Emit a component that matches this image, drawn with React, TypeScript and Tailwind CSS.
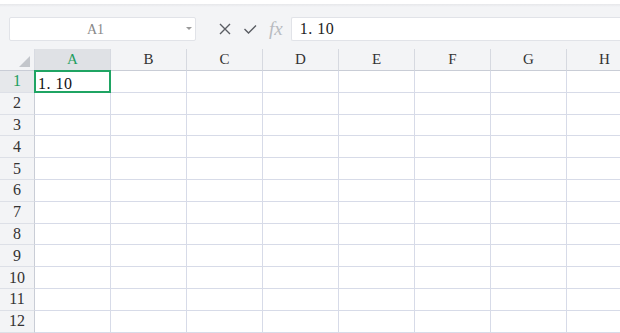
import React from 'react'

const COLS = ['A', 'B', 'C', 'D', 'E', 'F', 'G', 'H']
const ROWS = [1, 2, 3, 4, 5, 6, 7, 8, 9, 10, 11, 12]

const serif = "font-['Liberation_Serif','DejaVu_Serif',serif]"

const Toolbar = () => (
  <div className="h-[49px] bg-[#f3f4f6] border-t-[4px] border-t-white relative">
    <div className="absolute inset-x-0 top-0 h-[3px] bg-gradient-to-b from-[#e6e7ea] to-[#f3f4f6]" />
    <div className="flex items-center pt-[13px]">
      <div className="ml-[9px] w-[187px] h-[24px] bg-white border border-[#e1e3e8] rounded-[2px] flex items-center relative">
        <span className={`${serif} text-[14px] text-[#888] w-full text-center pr-[14px]`}>A1</span>
        <span className="absolute right-[3px] top-[9px] w-0 h-0 border-x-[3px] border-x-transparent border-t-[3px] border-t-[#999]" />
      </div>
      <div className="flex items-center ml-[20px] gap-[10px] text-[#555]">
        <svg width="14" height="14" viewBox="0 0 14 14" className="ml-[2px]">
          <path d="M2 2 L12 12 M12 2 L2 12" stroke="#5a5d63" strokeWidth="1.4" fill="none" />
        </svg>
        <svg width="14" height="14" viewBox="0 0 14 14" className="ml-[1px]">
          <path d="M1.5 7 L5.5 11 L13 3.5" stroke="#5a5d63" strokeWidth="1.4" fill="none" />
        </svg>
        <span className={`${serif} italic text-[19px] text-[#b8bbc0] leading-none -mt-[2px] ml-[2px]`}>fx</span>
      </div>
      <div className="ml-[8px] flex-1 h-[24px] bg-white border border-[#e1e3e8] border-r-0 rounded-l-[2px] flex items-center pl-[8px]">
        <span className={`${serif} text-[16px] text-[#222] tracking-[0.5px]`}>1. 10</span>
      </div>
    </div>
  </div>
)

const Grid = () => (
  <div className="grid grid-cols-[35px_repeat(8,76px)] auto-rows-[21.8px] grid-rows-[22px]">
    <div className="bg-[#f3f4f6] border-r border-r-[#d8dbe2] border-b border-b-[#c9cdd6] relative">
      <span className="absolute right-[4px] bottom-[3px] w-0 h-0 border-l-[11px] border-l-transparent border-b-[11px] border-b-[#c3c6cb]" />
    </div>
    {COLS.map(c => (
      <div
        key={c}
        className={`${serif} text-[15px] flex items-center justify-center border-r border-r-[#d6d9e0] border-b border-b-[#c9cdd6] ${c === 'A' ? 'bg-[#dfe1e5] text-[#1e9e5f]' : 'bg-[#f3f4f6] text-[#333]'}`}
      >
        {c}
      </div>
    ))}
    {ROWS.map(r => (
      <React.Fragment key={r}>
        <div
          className={`${serif} text-[16px] flex items-center justify-center border-r border-r-[#c9cdd6] border-b border-b-[#dde0e7] ${r === 1 ? 'bg-[#e6e8eb] text-[#1e9e5f]' : 'bg-[#f3f4f6] text-[#333]'}`}
        >
          {r}
        </div>
        {COLS.map(c => (
          <div key={c} className="border-r border-b border-[#d7dbe8] bg-white relative">
            {r === 1 && c === 'A' && (
              <>
                <span className={`${serif} text-[16px] text-[#111] absolute left-[3px] top-[1px] tracking-[0.5px]`}>1. 10</span>
                <div className="absolute -left-[1px] -top-[1px] -right-[1px] -bottom-[1px] border-2 border-[#1fa463]" />
                <div className="absolute -right-[3px] -bottom-[3px] w-[4px] h-[4px] bg-[#1fa463]" />
              </>
            )}
          </div>
        ))}
      </React.Fragment>
    ))}
  </div>
)

export default function App() {
  return (
    <div className="w-[620px] h-[333px] overflow-hidden bg-white">
      <Toolbar />
      <Grid />
    </div>
  )
}
